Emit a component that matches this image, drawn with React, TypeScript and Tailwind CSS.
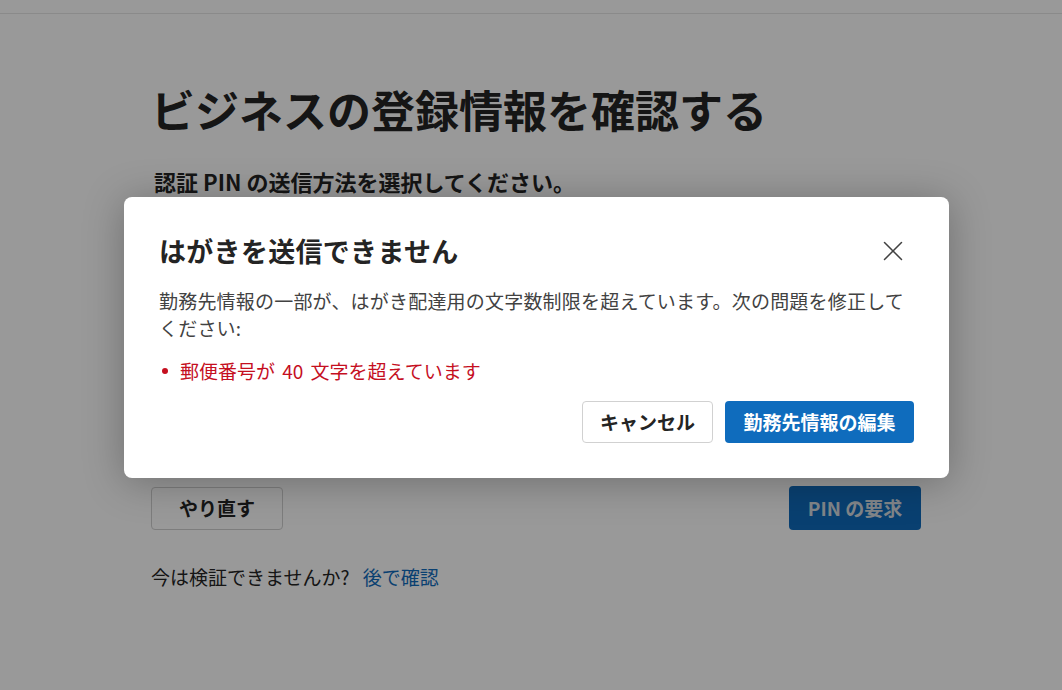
const font = "font-['Noto_Sans_CJK_JP','Noto_Sans',sans-serif]";

function CloseIcon() {
  return (
    <svg width="20" height="20" viewBox="0 0 20 20" fill="none" stroke="currentColor" strokeWidth="1.5" strokeLinecap="round">
      <path d="M1.5 1.5l17 17M18.5 1.5l-17 17" />
    </svg>
  );
}

function Dialog() {
  return (
    <div
      role="dialog"
      className="absolute left-[124px] top-[197px] w-[825px] rounded-lg bg-white px-[35px] pb-[35px] pt-[34px] shadow-[0_4px_40px_rgba(0,0,0,0.28)]"
    >
      <div className="flex items-center justify-between">
        <h2 className="text-[27px] font-bold leading-[36px] tracking-[0.3px] text-[#242424]">
          はがきを送信できません
        </h2>
        <button className="mr-[1px] flex h-10 w-10 items-center justify-center text-[#424242]">
          <CloseIcon />
        </button>
      </div>

      <p className="mt-[16px] text-[19px] leading-[27px] tracking-[0.2px] text-[#424242]">
        勤務先情報の一部が、はがき配達用の文字数制限を超えています。次の問題を修正してください:
      </p>

      <ul className="mt-[16px]">
        <li className="flex items-center gap-[12px] text-[19px] leading-[28px] text-[#c50f1f] [word-spacing:3px]">
          <span className="ml-[3px] h-[6px] w-[6px] rounded-full bg-[#c50f1f]" />
          郵便番号が 40 文字を超えています
        </li>
      </ul>

      <div className="mt-[16px] flex justify-end gap-3">
        <button className="h-[42px] w-[131px] rounded-[4px] border border-[#d1d1d1] bg-white text-[19px] font-bold text-[#242424]">
          キャンセル
        </button>
        <button className="h-[42px] w-[189px] rounded-[4px] bg-[#0f6cbd] text-[19px] font-bold text-white">
          勤務先情報の編集
        </button>
      </div>
    </div>
  );
}

export default function App() {
  return (
    <div className={`relative h-[690px] w-full overflow-hidden bg-white ${font}`}>
      <div className="h-[14px] border-b border-[#e6e6e6]" />

      <main className="ml-[151px] w-[770px] pt-[67px]">
        <h1 className="text-[44px] font-bold leading-[56px] text-[#242424]">
          ビジネスの登録情報を確認する
        </h1>
        <p className="ml-[3px] mt-[29px] text-[22px] font-semibold leading-[30px] text-[#242424]">
          認証 PIN の送信方法を選択してください。
        </p>

        <div className="h-[290px]" />

        <div className="flex items-center justify-between">
          <button className="h-[43px] w-[132px] rounded-[4px] border border-[#d1d1d1] bg-white text-[19px] font-bold text-[#242424]">
            やり直す
          </button>
          <button className="h-[44px] w-[132px] rounded-[4px] bg-[#0f6cbd] text-[19px] font-bold text-[#d8dee4]">
            PIN の要求
          </button>
        </div>

        <p className="mt-[34px] text-[19px] leading-[26px] text-[#242424] [word-spacing:9px]">
          今は検証できませんか?{" "}
          <a className="text-[#0f6cbd]">後で確認</a>
        </p>
      </main>

      <div className="absolute inset-0 bg-black/40" />
      <Dialog />
    </div>
  );
}
